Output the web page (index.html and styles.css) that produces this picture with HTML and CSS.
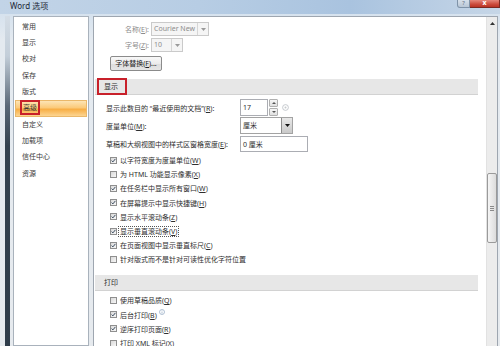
FILE: index.html
```html
<!DOCTYPE html>
<html lang="zh-CN">
<head>
<meta charset="utf-8">
<title>Word 选项</title>
<link rel="stylesheet" href="styles.css">
</head>
<body>
<div class="window">
  <div class="titlebar">
    <span class="title">Word 选项</span>
    <div class="caption">
      <span class="cap-help">?</span>
      <span class="cap-close">x</span>
    </div>
  </div>
  <div class="client">
    <div class="edge"><span class="edge-strip"></span></div>
    <ul class="nav">
      <li>常用</li>
      <li>显示</li>
      <li>校对</li>
      <li>保存</li>
      <li>版式</li>
      <li class="active"><span class="mark">高级</span></li>
      <li>自定义</li>
      <li>加载项</li>
      <li>信任中心</li>
      <li>资源</li>
    </ul>
    <div class="main">
      <div class="content">
        <div class="font-grid">
          <span class="flabel dis">名称(<u>E</u>):</span>
          <div class="combo dis-combo w58"><span class="ctext">Courier New</span><span class="carrow"><svg width="5" height="3" viewBox="0 0 5 3"><path d="M0 0H5L2.5 3Z" fill="#9a9a9a"/></svg></span></div>
          <span class="flabel dis">字号(<u>Z</u>):</span>
          <div class="combo dis-combo w32"><span class="ctext">10</span><span class="carrow"><svg width="5" height="3" viewBox="0 0 5 3"><path d="M0 0H5L2.5 3Z" fill="#9a9a9a"/></svg></span></div>
        </div>
        <div class="btn">字体替换(<u>F</u>)...</div>

        <div class="section"><span class="sec-mark">显示</span></div>

        <div class="opt-row r1">
          <span class="olabel">显示此数目的 “最近使用的文档”(<u>R</u>):</span>
          <div class="textbox w28"><span>17</span></div>
          <div class="spin">
            <span class="spin-btn"><svg width="4" height="2" viewBox="0 0 4 2"><path d="M0 2H4L2 0Z" fill="#555"/></svg></span>
            <span class="spin-btn"><svg width="4" height="2" viewBox="0 0 4 2"><path d="M0 0H4L2 2Z" fill="#555"/></svg></span>
          </div>
          <svg class="info" width="7" height="7" viewBox="0 0 7 7"><circle cx="3.5" cy="3.5" r="2.9" fill="none" stroke="#b9bec4" stroke-width="0.8"/><circle cx="3.5" cy="3.5" r="1" fill="#c4c8cc"/></svg>
        </div>
        <div class="opt-row r2">
          <span class="olabel">度量单位(<u>M</u>):</span>
          <div class="combo w53"><span class="ctext">厘米</span><span class="carrow dark"><svg width="5" height="3" viewBox="0 0 5 3"><path d="M0 0H5L2.5 3Z" fill="#111"/></svg></span></div>
        </div>
        <div class="opt-row r3">
          <span class="olabel">草稿和大纲视图中的样式区窗格宽度(<u>E</u>):</span>
          <div class="textbox w68"><span>0 厘米</span></div>
        </div>

        <ul class="checks first">
          <li><span class="cb on"><svg width="5" height="5" viewBox="0 0 5 5"><path d="M0.6 2.6L1.9 3.9L4.4 0.9" fill="none" stroke="#3b4c60" stroke-width="1"/></svg></span><span>以字符宽度为度量单位(<u>W</u>)</span></li>
          <li><span class="cb"></span><span>为 HTML 功能显示像素(<u>X</u>)</span></li>
          <li><span class="cb on"><svg width="5" height="5" viewBox="0 0 5 5"><path d="M0.6 2.6L1.9 3.9L4.4 0.9" fill="none" stroke="#3b4c60" stroke-width="1"/></svg></span><span>在任务栏中显示所有窗口(<u>W</u>)</span></li>
          <li><span class="cb on"><svg width="5" height="5" viewBox="0 0 5 5"><path d="M0.6 2.6L1.9 3.9L4.4 0.9" fill="none" stroke="#3b4c60" stroke-width="1"/></svg></span><span>在屏幕提示中显示快捷键(<u>H</u>)</span></li>
          <li><span class="cb on"><svg width="5" height="5" viewBox="0 0 5 5"><path d="M0.6 2.6L1.9 3.9L4.4 0.9" fill="none" stroke="#3b4c60" stroke-width="1"/></svg></span><span>显示水平滚动条(<u>Z</u>)</span></li>
          <li><span class="cb on"><svg width="5" height="5" viewBox="0 0 5 5"><path d="M0.6 2.6L1.9 3.9L4.4 0.9" fill="none" stroke="#3b4c60" stroke-width="1"/></svg></span><span class="focus">显示垂直滚动条(<u>V</u>)</span></li>
          <li><span class="cb on"><svg width="5" height="5" viewBox="0 0 5 5"><path d="M0.6 2.6L1.9 3.9L4.4 0.9" fill="none" stroke="#3b4c60" stroke-width="1"/></svg></span><span>在页面视图中显示垂直标尺(<u>C</u>)</span></li>
          <li><span class="cb"></span><span>针对版式而不是针对可读性优化字符位置</span></li>
        </ul>

        <div class="section print">打印</div>

        <ul class="checks second">
          <li><span class="cb"></span><span>使用草稿品质(<u>Q</u>)</span></li>
          <li><span class="cb on"><svg width="5" height="5" viewBox="0 0 5 5"><path d="M0.6 2.6L1.9 3.9L4.4 0.9" fill="none" stroke="#3b4c60" stroke-width="1"/></svg></span><span>后台打印(<u>B</u>)</span><svg class="info-sm" width="6" height="6" viewBox="0 0 6 6"><circle cx="3" cy="3" r="2.5" fill="none" stroke="#8fa6c0" stroke-width="0.7"/><path d="M3 2.5V4.6" stroke="#8fa6c0" stroke-width="0.7"/><circle cx="3" cy="1.6" r="0.4" fill="#8fa6c0"/></svg></li>
          <li><span class="cb on"><svg width="5" height="5" viewBox="0 0 5 5"><path d="M0.6 2.6L1.9 3.9L4.4 0.9" fill="none" stroke="#3b4c60" stroke-width="1"/></svg></span><span>逆序打印页面(<u>R</u>)</span></li>
          <li><span class="cb"></span><span>打印 XML 标记(<u>X</u>)</span></li>
        </ul>
      </div>
      <div class="scrollbar">
        <div class="sb-up"><svg width="5" height="3" viewBox="0 0 5 3"><path d="M0 3H5L2.5 0Z" fill="#333"/></svg></div>
        <div class="sb-thumb"><span class="grip"></span></div>
      </div>
    </div>
  </div>
</div>
</body>
</html>
```

FILE: styles.css
```css
* { box-sizing: border-box; margin: 0; padding: 0; }

html, body {
  width: 500px;
  height: 346px;
  overflow: hidden;
}

body {
  font-family: "Noto Sans", "Noto Sans CJK SC", sans-serif;
  font-size: 7px;
  color: #2e2e2e;
  background: #e3e9ef;
}

u { text-decoration: underline; text-underline-offset: 1px; }

.window {
  width: 500px;
  height: 346px;
  display: flex;
  flex-direction: column;
  background: linear-gradient(to bottom, #bfd2e6 0, #d6e2ee 14px, #e4eaf0 40px, #e6eaee 100%);
}

/* title bar */
.titlebar {
  height: 14px;
  display: flex;
  justify-content: space-between;
  align-items: flex-start;
  padding-left: 10px;
  background: linear-gradient(to right, #c2d4e7 0, #b7cde4 40%, #a9c3df 70%, #c6d6e7 100%);
}

.title {
  font-family: "Noto Sans", "Noto Sans CJK SC", sans-serif;
  font-size: 8px;
  line-height: 10px;
  padding-top: 1px;
  color: #1b2735;
}

.caption {
  display: flex;
}

.cap-help {
  width: 13px;
  height: 8px;
  border: 1px solid #7f93a8;
  border-top: none;
  border-radius: 0 0 0 3px;
  background: linear-gradient(to bottom, #d7e0ea, #b9c7d6);
  color: #5d6b7a;
  font-size: 6px;
  line-height: 6px;
  text-align: center;
}

.cap-close {
  width: 30px;
  height: 8px;
  border: 1px solid #7c2a22;
  border-top: none;
  border-left: none;
  background: linear-gradient(to bottom, #e5877b, #cc4b3c 60%, #b93325);
  color: #fff;
  font-weight: bold;
  font-size: 7px;
  line-height: 6px;
  text-align: center;
}

/* client */
.client {
  flex: 1;
  display: flex;
  padding-top: 2px;
  padding-right: 2px;
  min-height: 0;
}

.edge {
  width: 13px;
  display: flex;
  padding-left: 5px;
}

.edge-strip {
  width: 5px;
  background: linear-gradient(to bottom, #d4dde6 0, #c3ced9 40px, #5a6877 90px, #34424f 130px, #2f3c49 100%);
}

/* left navigation */
.nav {
  width: 76px;
  margin-right: 4px;
  list-style: none;
  background: #fff;
  border: 1px solid #a9b2bc;
  padding-top: 1.85px;
}

.nav li {
  height: 16.3px;
  line-height: 16.3px;
  padding-left: 8px;
  color: #3a3a3a;
}

.nav li.active {
  margin: 0 1px;
  padding-left: 7px;
  background: linear-gradient(to bottom, #fde4b4 0, #fbca7a 45%, #f8ae44 55%, #fcd592 100%);
  border: 1px solid #eab86a;
  line-height: 14.3px;
}

.mark {
  display: inline-block;
  vertical-align: middle;
  height: 15px;
  line-height: 11px;
  border: 2px solid #c8202a;
  padding: 0 1px;
  margin-left: -3px;
  margin-top: -1px;
}

/* main panel */
.main {
  flex: 1;
  display: flex;
  background: #fff;
  border: 1px solid #9ea6b0;
  border-bottom: none;
  min-width: 0;
}

.content {
  flex: 1;
  min-width: 0;
  overflow: hidden;
}

.font-grid {
  display: grid;
  grid-template-columns: 55px auto;
  column-gap: 2px;
  row-gap: 2px;
  padding-top: 5px;
  justify-content: start;
}

.flabel {
  justify-self: end;
  align-self: center;
}

.dis { color: #8c8c8c; }

.combo {
  height: 14px;
  display: flex;
  border: 1px solid #a3a3a3;
  background: #fff;
}

.dis-combo {
  border-color: #cacaca;
  background: #f5f5f5;
  color: #8c8c8c;
}

.ctext {
  flex: 1;
  padding-left: 2px;
  line-height: 12px;
  white-space: nowrap;
  overflow: hidden;
}

.carrow {
  width: 11px;
  display: flex;
  align-items: center;
  justify-content: center;
  border-left: 1px solid #d6d6d6;
}

.carrow.dark {
  background: linear-gradient(to bottom, #e8e8e8, #c9c9c9);
  border-left: 1px solid #8c8c8c;
}

.w58 { width: 58px; }
.w32 { width: 32px; }
.w53 { width: 53px; height: 17px; }
.w53 .ctext { line-height: 15px; }
.w28 { width: 28px; }
.w68 { width: 68px; }

.btn {
  width: 52px;
  height: 15px;
  margin: 4px 0 0 16px;
  border: 1px solid #8b8b8b;
  border-radius: 2px;
  background: linear-gradient(to bottom, #f8f8f8 0, #ececec 50%, #dcdcdc 51%, #e6e6e6 100%);
  text-align: center;
  line-height: 13px;
  color: #222;
}

/* section headers */
.section {
  height: 16px;
  margin: 8px 8px 0 1px;
  background: #e7e7e7;
  border-bottom: 1px solid #d2d2d2;
  display: flex;
  align-items: center;
  color: #2e2e2e;
}

.sec-mark {
  height: 17px;
  margin-top: -1px;
  margin-left: 2px;
  padding: 0 7px 0 5px;
  border: 2px solid #c8202a;
  line-height: 13px;
  align-self: flex-start;
}

.section.print {
  margin-top: 8.4px;
  padding-left: 9px;
}

/* option rows */
.opt-row {
  display: flex;
  align-items: center;
  padding-left: 12px;
}

.olabel {
  width: 134px;
  white-space: nowrap;
}

.r1 { margin-top: 4px; height: 17px; }
.r2 { margin-top: 1px; height: 17px; }
.r3 { margin-top: 2px; height: 16px; }

.textbox {
  height: 100%;
  border: 1px solid #abadb3;
  display: flex;
  align-items: center;
  padding-left: 2px;
}

.spin {
  width: 9px;
  height: 17px;
  margin-left: 1px;
  display: flex;
  flex-direction: column;
  gap: 1px;
}

.spin-btn {
  flex: 1;
  border: 1px solid #b0b0b0;
  border-radius: 1px;
  background: linear-gradient(to bottom, #f6f6f6, #e0e0e0);
  display: flex;
  align-items: center;
  justify-content: center;
}

.info { margin-left: 4px; }

/* checkbox lists */
.checks {
  list-style: none;
}

.checks.first { margin-top: 1px; }
.checks.second { margin-top: 2.5px; }

.checks li {
  height: 14.2px;
  display: flex;
  align-items: center;
  padding-left: 16px;
  white-space: nowrap;
}

.cb {
  width: 7px;
  height: 7px;
  margin-right: 3px;
  border: 1px solid #8f8f8f;
  background: linear-gradient(135deg, #d9d9d9, #f7f7f7);
  display: flex;
  align-items: center;
  justify-content: center;
  flex: none;
}

.focus {
  border: 1px dotted #555;
  margin-left: -2px;
  padding: 0 1px;
  height: 11px;
  line-height: 9px;
}

.info-sm {
  align-self: flex-start;
  margin-top: 1px;
  margin-left: 2px;
}

/* scrollbar */
.scrollbar {
  width: 11px;
  background: #ececec;
  border-left: 1px solid #e2e2e2;
  display: flex;
  flex-direction: column;
  align-items: center;
}

.sb-up {
  height: 13px;
  width: 100%;
  display: flex;
  align-items: center;
  justify-content: center;
}

.sb-thumb {
  margin-top: 143px;
  width: 10px;
  height: 70px;
  border: 1px solid #9a9a9a;
  border-radius: 2px;
  background: linear-gradient(to right, #f5f5f5, #dcdcdc);
  display: flex;
  align-items: center;
  justify-content: center;
}

.grip {
  width: 4px;
  height: 5px;
  border-top: 1px solid #8a8a8a;
  border-bottom: 1px solid #8a8a8a;
  background: linear-gradient(to bottom, transparent 1px, #8a8a8a 1px, #8a8a8a 2px, transparent 2px);
}
```
